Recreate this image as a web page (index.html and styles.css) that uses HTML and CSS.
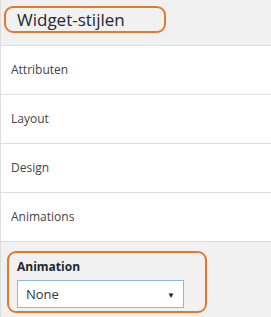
FILE: index.html
```html
<!DOCTYPE html>
<html lang="nl">
<head>
  <meta charset="UTF-8" />
  <title>Widget-stijlen</title>
  <link rel="stylesheet" href="styles.css">
</head>
<body>

  <div class="panel">
    <div class="panel-head">
      <div class="mark head-mark">Widget-stijlen</div>
    </div>

    <div class="section">Attributen</div>
    <div class="section">Layout</div>
    <div class="section">Design</div>
    <div class="section">Animations</div>

    <div class="section-body">
      <div class="mark field-mark">
        <label class="field-label">Animation</label>
        <div class="select">
          <span>None</span>
          <span class="arrow">▼</span>
        </div>
      </div>
    </div>
  </div>

</body>
</html>
```

FILE: styles.css
```css
body {
  margin: 0;
  font-family: "Open Sans", "Noto Sans", sans-serif;
  background: #fff;
  color: #23282d;
}
.panel {
  width: 271px;
  height: 317px;
  border-left: 1px solid #ddd;
  box-sizing: border-box;
  overflow: hidden;
}
.panel-head {
  background: #f1f1f1;
  height: 46px;
  border-bottom: 1px solid #ddd;
  padding: 6px 0 0 3px;
  box-sizing: border-box;
}
.mark {
  border: 2px solid #e27a2c;
  border-radius: 9px;
  box-sizing: border-box;
}
.head-mark {
  width: 162px;
  height: 27px;
  padding-left: 11px;
  font-size: 17px;
  line-height: 24px;
  color: #23282d;
}
.section {
  height: 48px;
  line-height: 48px;
  border-bottom: 1px solid #ddd;
  padding-left: 10px;
  font-size: 12px;
  color: #444;
  background: #fff;
}
.section-body {
  background: #f1f1f1;
  height: 80px;
  padding: 9px 0 0 6px;
  box-sizing: border-box;
}
.field-mark {
  width: 200px;
  height: 62px;
  padding: 5px 0 0 8px;
}
.field-label {
  display: block;
  font-size: 12px;
  font-weight: bold;
  color: #23282d;
  line-height: 18px;
}
.select {
  margin-top: 4px;
  width: 167px;
  height: 28px;
  border: 1px solid #8fb8dc;
  background: #fff;
  box-sizing: border-box;
  display: flex;
  align-items: center;
  justify-content: space-between;
  padding: 0 8px 0 8px;
  font-size: 13px;
  color: #32373c;
}
.arrow {
  font-size: 8px;
  color: #222;
}
```
